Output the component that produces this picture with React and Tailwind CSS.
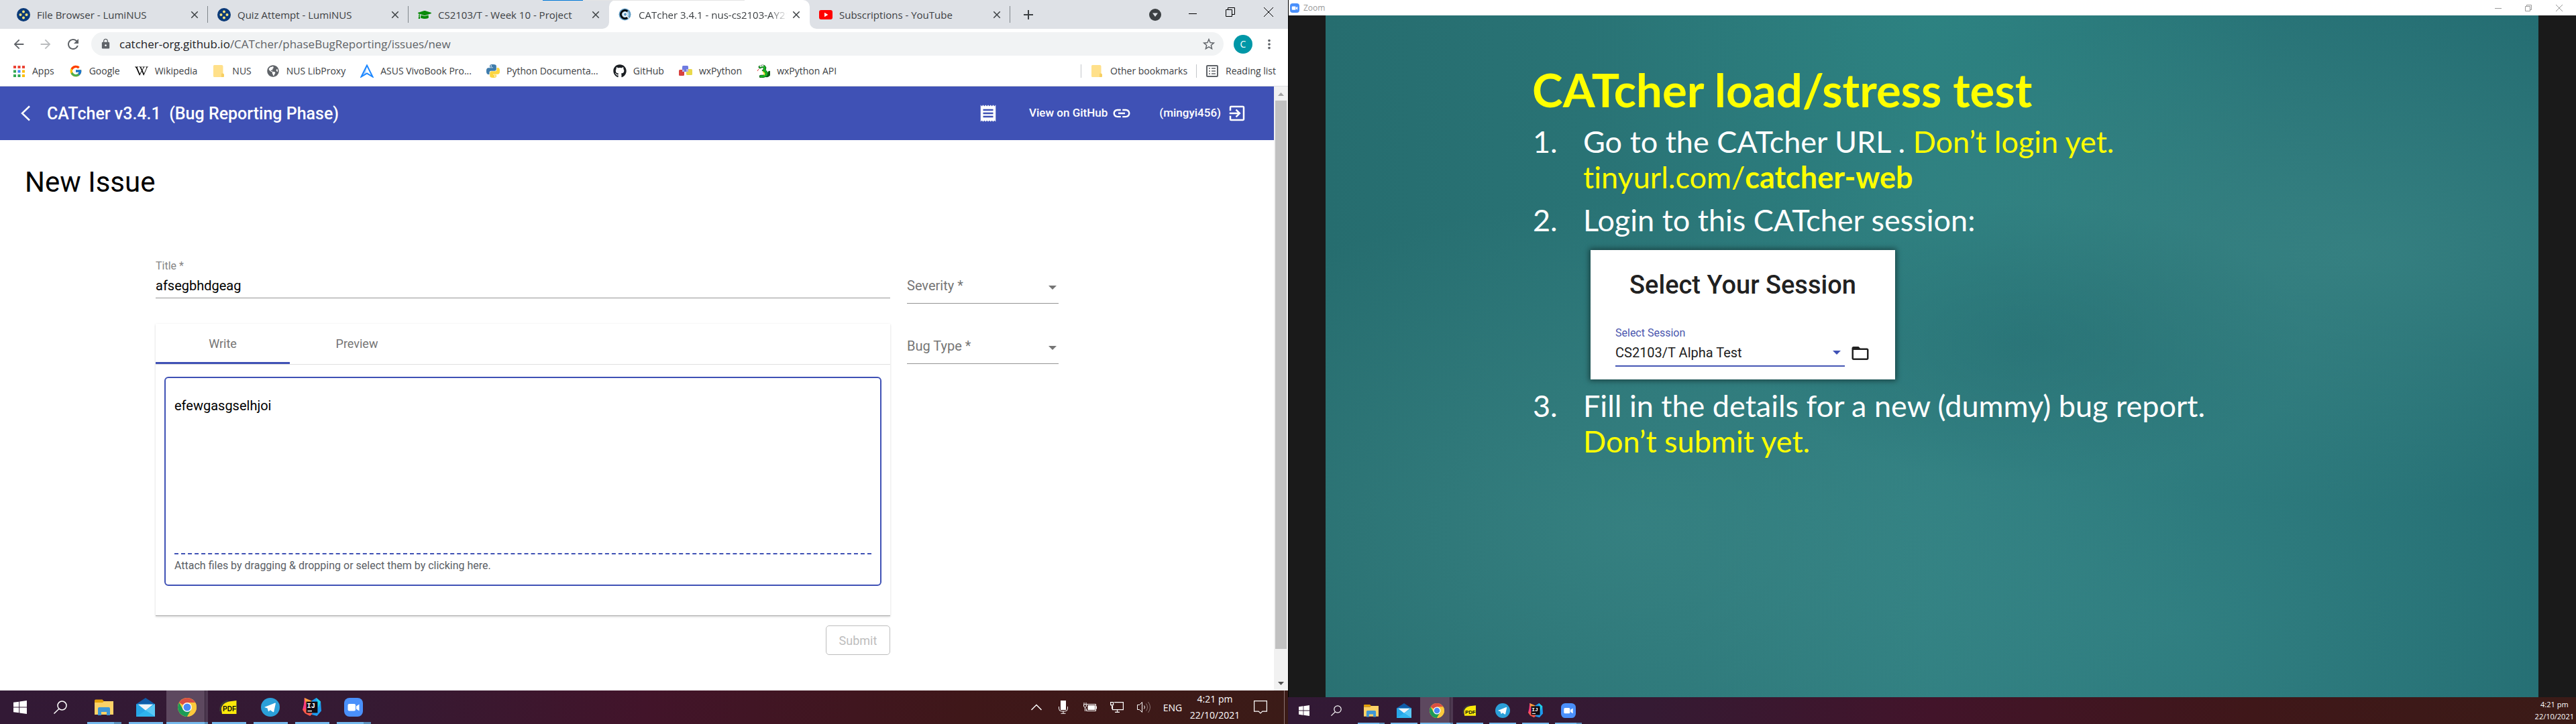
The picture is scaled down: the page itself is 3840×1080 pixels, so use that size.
import React from "react";
import { FcGoogle } from "react-icons/fc";
import { FaGithub, FaGraduationCap, FaWikipediaW, FaGlobeAmericas } from "react-icons/fa";
import { MdArrowBack, MdArrowForward, MdRefresh, MdLock, MdStarBorder, MdMoreVert, MdReceipt, MdLink, MdExitToApp, MdFolderOpen, MdClose, MdAdd } from "react-icons/md";

const LumiIcon = () => (
  <svg viewBox="0 0 20 20" className="size-5 shrink-0" aria-hidden="true">
    <circle cx="10" cy="10" r="10" fill="#0b3a78" />
    <circle cx="10" cy="5.5" r="2" fill="#f6e27a" />
    <circle cx="10" cy="14.5" r="2" fill="#f6e27a" />
    <circle cx="5.5" cy="10" r="2" fill="#f6e27a" />
    <circle cx="14.5" cy="10" r="2" fill="#f6e27a" />
  </svg>
);
const CapIcon = () => <FaGraduationCap className="size-5 shrink-0 text-[#0a8a0a]" />;
const CatcherIcon = () => (
  <svg viewBox="0 0 20 20" className="size-5 shrink-0" aria-hidden="true">
    <circle cx="9.500" cy="9.500" r="9" fill="#5f9bc4" />
    <circle cx="9.500" cy="9.500" r="6.500" fill="#a9cbe2" />
    <path d="M13.500 5A6 6 0 1 0 13.500 14" fill="none" stroke="#000" strokeWidth="2.800" />
    <circle cx="10" cy="9.500" r="2.800" fill="#5f9bc4" stroke="#fff" strokeWidth="1.300" />
    <path d="M12 12l3.500 3.500" stroke="#fff" strokeWidth="1.300" />
  </svg>
);
const YouTubeIcon = () => (
  <svg viewBox="0 0 20 20" className="size-5 shrink-0" aria-hidden="true">
    <rect y="3" width="20" height="14" rx="3" fill="#f00" />
    <path d="M8 6.800v6.400l5.400-3.200z" fill="#fff" />
  </svg>
);
const AppsIcon = () => (
  <svg viewBox="0 0 20 20" className="size-5" aria-hidden="true">
    {["#ea4335", "#ea4335", "#ea4335", "#34a853", "#4285f4", "#fbbc05", "#34a853", "#34a853", "#fbbc05"].map((c, i) => (
      <rect key={i} x={2 + (i % 3) * 6.5} y={2 + Math.floor(i / 3) * 6.5} width="4" height="4" fill={c} />
    ))}
  </svg>
);
const FolderIcon = () => (
  <svg viewBox="0 0 20 20" className="size-5" aria-hidden="true">
    <path d="M3.500 1h11a2 2 0 0 1 2 2v10.500l1.500 1.500v2.500a1.500 1.500 0 0 1-1.500 1.500h-13a1.500 1.500 0 0 1-1.500-1.500v-15a1.500 1.500 0 0 1 1.500-1.500z" fill="#ffe08a" />
    <path d="M14 19v-4.500a1 1 0 0 1 1-1h1.500l1.500 1.500v2.500a1.500 1.500 0 0 1-1.500 1.500z" fill="#f7cf62" />
  </svg>
);
const AsusIcon = () => (
  <svg viewBox="0 0 20 20" className="size-5" aria-hidden="true">
    <path d="M10 1.500L1.500 18.500l8.500-5 8.500 5z" fill="none" stroke="#1e88ff" strokeWidth="2" />
    <path d="M10 2L8 14l-6 4z" fill="#1e88ff" opacity=".35" />
  </svg>
);
const PythonIcon = () => (
  <svg viewBox="0 0 24 24" className="size-5" aria-hidden="true">
    <path fill="#3f7cac" d="M14.250.18l.9.2.73.26.59.3.45.32.34.34.25.34.16.33.1.3.04.26.02.2-.01.13V8.500l-.05.63-.13.55-.21.46-.26.38-.3.31-.33.25-.35.19-.35.14-.33.1-.3.07-.26.04-.21.02H8.770l-.69.05-.59.14-.5.22-.41.27-.33.32-.27.35-.2.36-.15.37-.1.35-.07.32-.04.27-.02.21v3.060H3.170l-.21-.03-.28-.07-.32-.12-.35-.18-.36-.26-.36-.36-.35-.46-.32-.59-.28-.73-.21-.88-.14-1.050-.05-1.230.06-1.220.16-1.040.24-.87.32-.71.36-.57.4-.44.42-.33.42-.24.4-.16.36-.1.32-.05.24-.01h.16l.06.01h8.160v-.83H6.180l-.01-2.750-.02-.37.05-.34.11-.31.17-.28.25-.26.31-.23.38-.2.44-.18.51-.15.58-.12.64-.1.71-.06.77-.04.84-.02 1.270.05z" />
    <path fill="#fdd63f" d="M21.100 6.110l.28.06.32.12.35.18.36.27.36.35.35.47.32.59.28.73.21.88.14 1.040.05 1.230-.06 1.230-.16 1.040-.24.86-.32.71-.36.57-.4.45-.42.33-.42.24-.4.16-.36.09-.32.05-.24.02-.16-.01h-8.220v.82h5.840l.01 2.760.02.36-.05.34-.11.31-.17.29-.25.25-.31.24-.38.2-.44.17-.51.15-.58.13-.64.09-.71.07-.77.04-.84.01-1.270-.04-1.070-.14-.9-.2-.73-.25-.59-.3-.45-.33-.34-.34-.25-.34-.16-.33-.1-.3-.04-.25-.02-.2.01-.13v-5.340l.05-.64.13-.54.21-.46.26-.38.3-.32.33-.24.35-.2.35-.14.33-.1.3-.06.26-.04.21-.02.13-.01h5.840l.69-.05.59-.14.5-.21.41-.28.33-.32.27-.35.2-.36.15-.36.1-.35.07-.32.04-.28.02-.21V6.070h2.090l.14.01z" />
    <circle cx="8.700" cy="2.900" r="1.100" fill="#fff" />
    <circle cx="15.300" cy="21" r="1.100" fill="#fff" />
  </svg>
);
const WxIcon = () => (
  <svg viewBox="0 0 20 20" className="size-5" aria-hidden="true">
    <rect x="5" y="2" width="9" height="9" rx="1.500" fill="#6f7be0" />
    <rect x="0" y="8" width="8" height="9" rx="1.500" fill="#d8423f" />
    <rect x="11" y="7" width="9" height="9" rx="1.500" fill="#e9d94a" />
    <path d="M5 8h3v3H5zM11 7h3v4h-3z" fill="#b9b6e6" />
  </svg>
);
const SnakeIcon = () => (
  <svg viewBox="0 0 20 20" className="size-5" aria-hidden="true">
    <path d="M5 4q5-3 7 1 0 3-1 4c3 2 5 5 3 7s-5 2-8 2M15 17q4-1 4-5" fill="none" stroke="#0d5a16" strokeWidth="4.500" strokeLinecap="round" />
    <path d="M5 4q5-3 7 1 0 3-1 4c3 2 5 5 3 7s-5 2-8 2" fill="none" stroke="#16b622" strokeWidth="2.800" strokeLinecap="round" />
    <path d="M9 11c2 1 3 3 2 5" fill="none" stroke="#e8e832" strokeWidth="1.800" />
    <circle cx="6" cy="2.500" r="1.600" fill="#ddd" />
    <circle cx="9" cy="2" r="1.400" fill="#ddd" />
    <path d="M3 7l-2 3" stroke="#e53935" />
  </svg>
);
const ReadingIcon = () => (
  <svg viewBox="0 0 20 20" className="size-5" aria-hidden="true" fill="none" stroke="#5f6368" strokeWidth="2">
    <rect x="2" y="2" width="16" height="16" rx="1" />
    <path d="M5 6h2M9 6h6M5 10h2M9 10h6M5 14h2M9 14h6" strokeWidth="1.600" />
  </svg>
);

const TABS = [
  { title: "File Browser - LumiNUS", Icon: LumiIcon, sep: true },
  { title: "Quiz Attempt - LumiNUS", Icon: LumiIcon, sep: true },
  { title: "CS2103/T - Week 10 - Project", Icon: CapIcon },
  { title: "CATcher 3.4.1 - nus-cs2103-AY21", Icon: CatcherIcon, active: true },
  { title: "Subscriptions - YouTube", Icon: YouTubeIcon, sep: true },
];

const BOOKMARKS = [
  ["Apps", AppsIcon],
  ["Google", () => <FcGoogle className="size-5" />],
  ["Wikipedia", () => <FaWikipediaW className="size-5 text-black" />],
  ["NUS", FolderIcon],
  ["NUS LibProxy", () => <FaGlobeAmericas className="size-[18px] text-[#5f6368]" />],
  ["ASUS VivoBook Pro...", AsusIcon],
  ["Python Documenta...", PythonIcon],
  ["GitHub", () => <FaGithub className="size-5 text-[#1b1f23]" />],
  ["wxPython", WxIcon],
  ["wxPython API", SnakeIcon],
];

function Tab({ title, Icon, active, sep }) {
  return (
    <div className={"relative flex h-[43px] w-[299px] items-center pl-[14px] pr-[11px] " + (active ? "rounded-t-[10px] bg-white" : "")}>
      {active && (
        <>
          <svg viewBox="0 0 10 10" className="absolute bottom-0 -left-[10px] size-[10px]" aria-hidden="true"><path d="M10 0v10H0A10 10 0 0 0 10 0z" fill="#fff" /></svg>
          <svg viewBox="0 0 10 10" className="absolute bottom-0 -right-[10px] size-[10px]" aria-hidden="true"><path d="M0 0v10h10A10 10 0 0 1 0 0z" fill="#fff" /></svg>
        </>
      )}
      <Icon />
      <span className={"ml-[10px] min-w-0 flex-1 whitespace-nowrap text-[15px] leading-5 text-[#3c4043] " + (active ? "[mask-image:linear-gradient(to_right,#000_88%,transparent)]" : "")}>{title}</span>
      <button type="button" aria-label={"Close " + title} className="ml-1 text-[#3c4043]"><MdClose className="size-[18px]" /></button>
      {sep && <span className="absolute top-[9px] right-0 h-[25px] w-px bg-[#80868b]" />}
    </div>
  );
}

function Bookmark({ label, Icon }) {
  return (
    <a href="#" className="flex items-center gap-[10px] text-[14px] leading-5 text-[#3c4043]">
      <span className="flex size-5 items-center justify-center"><Icon /></span>
      {label}
    </a>
  );
}

function Chrome() {
  return (
    <header className="shrink-0 font-['Open_Sans',sans-serif]">
      <div className="relative flex h-[43px] items-center bg-[#dee1e6] pl-[11px]">
        {TABS.map((t) => <Tab key={t.title} {...t} />)}
        <div className="absolute top-0 left-[809px] flex h-px w-[301px] bg-[#e4e4e4]"><span className="w-[60px] bg-[#0078d7]" /></div>
        <button type="button" aria-label="New tab" className="ml-[15px] text-[#3c4043]"><MdAdd className="size-6" /></button>
        <div className="ml-auto flex items-center">
          <button type="button" aria-label="Search tabs" className="mr-[19px]">
            <svg viewBox="0 0 18 18" className="size-[18px]" aria-hidden="true"><circle cx="9" cy="9" r="9" fill="#3c4043" /><path d="M5 6.500h8l-4 5.500z" fill="#dee1e6" /></svg>
          </button>
          <button type="button" aria-label="Minimize" className="flex w-[56px] justify-center pb-2"><svg viewBox="0 0 12 12" className="size-3"><path d="M0 8.500h12" stroke="#000" /></svg></button>
          <button type="button" aria-label="Restore" className="flex w-[56px] justify-center pb-2"><svg viewBox="0 0 14 14" className="size-[14px]" fill="none" stroke="#000"><path d="M.5 3.500h9v10h-9zM3.500 3.500v-3h10v10h-4" /></svg></button>
          <button type="button" aria-label="Close" className="flex w-[58px] justify-center pb-2"><svg viewBox="0 0 14 14" className="size-[14px]" fill="none" stroke="#000"><path d="M0 0l14 14M14 0L0 14" /></svg></button>
        </div>
      </div>
      <div className="flex h-[45px] items-center bg-white pl-[17px] pr-[17px] text-[#5f6368]">
        <button type="button" aria-label="Back" className="mr-[18px]"><MdArrowBack className="size-[22px]" /></button>
        <button type="button" aria-label="Forward" className="mr-[18px] text-[#babcbe]"><MdArrowForward className="size-[22px]" /></button>
        <button type="button" aria-label="Reload" className="mr-[15px]"><MdRefresh className="size-6" /></button>
        <div className="flex h-[35px] flex-1 items-center rounded-full bg-[#f1f3f4] pl-[13px] pr-[11px] text-[17px]">
          <MdLock className="mr-[12px] size-[17px]" />
          <span className="text-[#202124]">catcher-org.github.io</span><span>/CATcher/phaseBugReporting/issues/new</span>
          <button type="button" aria-label="Bookmark this tab" className="ml-auto"><MdStarBorder className="size-[22px]" /></button>
        </div>
        <button type="button" className="ml-[15px] size-[28px] rounded-full bg-[#0097a7] text-[14px] text-white">C</button>
        <button type="button" aria-label="Menu" className="ml-[14px]"><MdMoreVert className="size-[22px]" /></button>
      </div>
      <nav className="flex h-[41px] items-center gap-[22px] border-b border-[#dadce0] bg-white pl-[18px] pr-[18px] pb-1">
        {BOOKMARKS.map(([label, Icon]) => <Bookmark key={label} label={label} Icon={Icon} />)}
        <div className="ml-auto flex items-center gap-[13px]">
          <span className="h-5 w-px bg-[#c4c7ca]" />
          <Bookmark label="Other bookmarks" Icon={FolderIcon} />
          <span className="h-5 w-px bg-[#c4c7ca]" />
          <Bookmark label="Reading list" Icon={ReadingIcon} />
        </div>
      </nav>
    </header>
  );
}

function SelectField({ label, options }) {
  return (
    <label className="relative block border-b border-[#949494] pt-5 pb-2">
      <select defaultValue="" aria-label={label} className="block h-[37px] w-full appearance-none bg-transparent text-[20px] text-[#757575] outline-none">
        <option value="" disabled>{label}</option>
        {options.map((o) => <option key={o}>{o}</option>)}
      </select>
      <svg viewBox="0 0 12 6" className="pointer-events-none absolute top-[39px] right-[3px] h-[6px] w-3" aria-hidden="true"><path d="M0 0h12L6 6z" fill="#757575" /></svg>
    </label>
  );
}

function IssuePage() {
  return (
    <div className="flex min-h-0 flex-1 font-[Roboto,sans-serif]">
      <main className="min-w-0 flex-1 bg-white">
        <div className="flex h-20 items-center bg-[#3f51b5] pl-[30px] pr-[40px] text-white">
          <button type="button" aria-label="Go back" className="mr-[24px]">
            <svg viewBox="0 0 16 24" className="h-6 w-4" fill="none" stroke="#fff" strokeWidth="2.500"><path d="M14 1.500L3 12l11 10.500" /></svg>
          </button>
          <span className="pt-0.5 text-[25px] font-medium whitespace-pre">{"CATcher v3.4.1  (Bug Reporting Phase)"}</span>
          <button type="button" aria-label="Changelog" className="ml-auto"><MdReceipt className="size-[30px]" /></button>
          <a href="#" className="ml-[46px] flex items-center gap-[6px] text-[17px] font-medium">View on GitHub<MdLink className="size-[30px]" /></a>
          <button type="button" className="ml-[41px] flex items-center gap-[9px] text-[17px] font-medium">(mingyi456)<MdExitToApp className="size-[30px]" /></button>
        </div>
        <h1 className="mt-[38px] pl-[37px] text-[42px] leading-[50px] text-black">New Issue</h1>
        <form className="mt-[90px] grid grid-cols-[1095fr_226fr] items-start gap-x-[25px] pr-[321px] pl-[232px]">
          <div>
            <label className="block border-b border-[#949494]">
              <span className="block text-[16px] leading-5 text-[#858585]">Title *</span>
              <input defaultValue="afsegbhdgeag" className="block h-[37px] w-full bg-transparent text-[20px] text-black outline-none" />
            </label>
            <section className="mt-[38px] border-b border-[#a4a4a4] pb-[44px] shadow-[0_1px_3px_0_rgba(0,0,0,0.16)]">
              <div role="tablist" className="flex h-[61px] border-b border-[#e0e0e0] text-[18px] text-[#757575]">
                <button type="button" role="tab" aria-selected="true" className="w-[200px] border-b-[3px] border-[#3f51b5] pt-px">Write</button>
                <button type="button" role="tab" aria-selected="false" className="w-[200px] pb-px">Preview</button>
              </div>
              <div className="mx-[13px] mt-[18px] flex h-[312px] flex-col rounded-md border-2 border-[#3f51b5] px-[13px]">
                <textarea aria-label="Description" defaultValue="efewgasgselhjoi" className="min-h-0 flex-1 resize-none pt-[27px] text-[20px] leading-7 text-black outline-none" />
                <button type="button" className="border-t-2 border-dashed border-[#3f51b5] pt-[6px] pb-[17px] text-left text-[16px] leading-[22px] text-[#5b6066]">Attach files by dragging &amp; dropping or select them by clicking here.</button>
              </div>
            </section>
            <button type="submit" disabled className="mt-[14px] ml-auto block h-[44px] w-[96px] rounded-[5px] border border-[#bdbdbd] text-[18px] text-[#bdbdbd]">Submit</button>
          </div>
          <div className="flex flex-col gap-6">
            <SelectField label="Severity *" options={["High", "Medium", "Low"]} />
            <SelectField label="Bug Type *" options={["Functionality", "Documentation"]} />
          </div>
        </form>
      </main>
      <div className="flex w-[21px] shrink-0 flex-col items-center bg-[#f1f1f1]" aria-hidden="true">
        <svg viewBox="0 0 21 21" className="size-[21px]"><path d="M6 14h9l-4.500-5z" fill="#a3a3a3" /></svg>
        <span className="w-[17px] flex-1 bg-[#c1c1c1]" />
        <svg viewBox="0 0 21 62" className="h-[62px] w-[21px]"><path d="M6 49h9l-4.500 5z" fill="#505050" /></svg>
      </div>
    </div>
  );
}

const WinIcon = () => <svg viewBox="0 0 20 20" className="size-full"><path d="M0 2.800L8.200 1.700v7.800H0zM9.200 1.500L20 0v9.500H9.200zM0 10.500h8.200v7.800L0 17.200zM9.200 10.500H20V20L9.200 18.500z" fill="#fff" /></svg>;
const SearchIcon = () => <svg viewBox="0 0 20 20" className="size-full" fill="none" stroke="#fff" strokeWidth="1.500"><circle cx="12.500" cy="7.500" r="6.500" /><path d="M8 12.300L.5 19.500" /></svg>;
const ExplorerIcon = () => (
  <svg viewBox="0 0 28 28" className="size-full"><path d="M0 4A1.500 1.500 0 0 1 1.500 2.500h10L14 5v2H0z" fill="#e3a008" /><path d="M0 7h12l2-2h14v20H0z" fill="#fcd267" /><path d="M5 26V16a2 2 0 0 1 2-2h14a2 2 0 0 1 2 2v10h-5v-5h-8v5z" fill="#3f97d6" /></svg>
);
const MailIcon = () => (
  <svg viewBox="0 0 30 30" className="size-full"><path d="M0 10L15 0l15 10-2 5H2z" fill="#0f5ca8" /><path d="M0 10h30v20H0z" fill="#27a6e8" /><path d="M3 10.500h24L15 20z" fill="#f1f4f7" /><path d="M30 10v20L15 20z" fill="#5ac8f5" /><path d="M30 30H0l15-10z" fill="#2fb4ee" /></svg>
);
const ChromeIcon = () => (
  <svg viewBox="0 0 28 28" className="size-full"><circle cx="14" cy="14" r="14" fill="#fcc93c" /><path d="M14 14L1.900 7A14 14 0 0 1 26.100 7H14z" fill="#d94f43" /><path d="M14 14l-6.100 3.500L1.900 7A14 14 0 0 0 14 28l6.100-10.500z" fill="#1c9b57" /><path d="M14 7h12.100A14 14 0 0 1 14 28l6.100-10.500z" fill="#fcc93c" /><circle cx="14" cy="14" r="7" fill="#fff" /><circle cx="14" cy="14" r="5.500" fill="#4a8af4" /></svg>
);
const PdfIcon = () => (
  <svg viewBox="0 0 28 28" className="size-full"><path d="M2.500 14Q7 6 14 5.500l11.500-1.500v20H4z" fill="#fbe90a" /><path d="M1.500 20C1 11 6 6 13 4.500" fill="none" stroke="#3a3a3a" strokeWidth="2.500" /><text x="15" y="20" textAnchor="middle" fontFamily="Liberation Sans, sans-serif" fontWeight="700" fontSize="10" fill="#111">PDF</text></svg>
);
const TelegramIcon = () => (
  <svg viewBox="0 0 28 28" className="size-full"><circle cx="14" cy="14" r="14" fill="#2b9fd9" /><path d="M5.500 13.800L20.600 7.700c.8-.3 1.400.2 1.200 1.200l-2.500 11.500c-.2.9-.8 1.100-1.500.7l-4-2.900-2 1.900c-.4.4-.8.2-.9-.3l-1.300-4.300-3.900-1.200c-.8-.3-.8-.7-.2-.5z" fill="#fff" /></svg>
);
const IjIcon = () => (
  <svg viewBox="0 0 30 30" className="size-full"><path d="M3 0l10 5-1 18H6L0 19l2-8z" fill="#fc3b7c" /><path d="M3 0l12 5-9 6z" fill="#fca23c" /><path d="M14 5l8-5 7 6 1 15-7 8-11-3 8-8z" fill="#1e9bf0" /><path d="M22 0l7 6-4 10z" fill="#21d1e8" /><path d="M0 19l6-2 10 8-4 4-8-4z" fill="#fb5a4c" /><rect x="6" y="6" width="18" height="18" fill="#100a10" /><text x="7" y="16" fontFamily="Liberation Mono, monospace" fontWeight="700" fontSize="11" fill="#fff">IJ</text><path d="M8 21h7" stroke="#fff" strokeWidth="1.500" /></svg>
);
const ZoomIcon = () => (
  <svg viewBox="0 0 28 28" className="size-full"><rect width="28" height="28" rx="8" fill="#4a90fb" /><rect x="5.500" y="9" width="11.500" height="10.500" rx="2" fill="#fff" /><path d="M18 12.500l4.500-3v10l-4.500-3z" fill="#fff" /></svg>
);

const APPS = [
  ["File Explorer", ExplorerIcon, "multi"],
  ["Mail", MailIcon],
  ["Google Chrome", ChromeIcon, "active"],
  ["PDF reader", PdfIcon],
  ["Telegram", TelegramIcon],
  ["IntelliJ IDEA", IjIcon],
  ["Zoom", ZoomIcon, "multi"],
];

const LARGE = { bar: "h-[50px]", first: "w-[60px]", sys: "size-5", pad: "w-1", item: "w-[62px]", icon: "size-[28px]", line: "w-[51px]", lineH: "h-[3px]" };
const SMALL = { bar: "h-[40px]", first: "w-[48px]", sys: "size-4", pad: "w-[3px]", item: "w-[49px]", icon: "size-[22px]", line: "w-[40px]", lineH: "h-[2px]" };

function Taskbar({ s, children }) {
  return (
    <footer className={"flex shrink-0 items-stretch bg-[linear-gradient(to_right,#321935,#351a33_28%,#42142a_50%,#3f1719_75%,#3b1b17)] font-['Open_Sans',sans-serif] text-white " + s.bar}>
      <button type="button" aria-label="Start" className={"flex items-center justify-center " + s.first}><span className={s.sys}><WinIcon /></span></button>
      <button type="button" aria-label="Search" className={"flex items-center justify-center " + s.first}><span className={s.sys}><SearchIcon /></span></button>
      <span className={s.pad} />
      {APPS.map(([name, Icon, state]) => (
        <button key={name} type="button" aria-label={name} className={"relative flex flex-col items-center justify-center " + s.item + (state === "active" ? " bg-[#5d485f]" : "")}>
          {state === "active" && <span className="absolute inset-y-0 right-0 w-[5px] border-l border-[#352538] bg-[#4d3850]" />}
          <span className={s.icon}><Icon /></span>
          <span className={"absolute bottom-0 flex bg-[#76b9ed] " + s.lineH + " " + (state === "active" ? "w-full" : s.line)}>
            {state && <span className={"ml-auto bg-[#5b8fbb] " + (state === "active" ? "w-1/12" : "w-1/5")} />}
          </span>
        </button>
      ))}
      {children}
    </footer>
  );
}

function Tray() {
  const cell = "flex w-10 items-center justify-center";
  return (
    <div className="ml-auto flex items-stretch text-[14px]">
      <button type="button" aria-label="Show hidden icons" className={cell}><svg viewBox="0 0 16 10" className="h-[10px] w-4" fill="none" stroke="#fff" strokeWidth="1.500"><path d="M.5 9L8 1.500 15.500 9" /></svg></button>
      <button type="button" aria-label="Microphone" className={cell}><svg viewBox="0 0 14 20" className="h-5 w-[14px]"><rect x="3" width="8" height="14" fill="#fff" /><path d="M.5 9v3a4 4 0 0 0 4 4h5a4 4 0 0 0 4-4V9M7 16v3M3.500 19.300h7" fill="none" stroke="#fff" /></svg></button>
      <button type="button" aria-label="Battery" className={cell}><svg viewBox="0 0 20 14" className="h-[14px] w-5" fill="none" stroke="#fff"><path d="M5 2.500h13.500v10H4.500V9" /><rect x="7" y="4.500" width="10" height="6" fill="#fff" /><path d="M19.500 5.500v4M1 0v3M4 0v3M.5 3h4v2a2 2 0 0 1-4 0zM2.500 7v6" /></svg></button>
      <button type="button" aria-label="Network" className={cell}><svg viewBox="0 0 20 16" className="h-4 w-5" fill="none" stroke="#fff" strokeWidth="1.200"><path d="M6 .6h13.400v11H3.500V6M.6.600h4v4h-4zM2.600 4.600v6M10.500 12v3M7 15.300h7" /></svg></button>
      <button type="button" aria-label="Volume" className={cell}><svg viewBox="0 0 20 18" className="h-[18px] w-5" fill="none" stroke="#fff"><path d="M.5 5.500h3l4-4v15l-4-4h-3z" /><path d="M10.500 6.500q2 2.500 0 5" /><path d="M13.500 3.500q4 5.500 0 11M16.500 1q6 8 0 16" opacity=".4" /></svg></button>
      <button type="button" className="w-[46px]">ENG</button>
      <div className="flex w-20 flex-col items-center justify-center leading-6 whitespace-nowrap"><span>4:21 pm</span><span>22/10/2021</span></div>
      <button type="button" aria-label="Notifications" className="flex w-14 items-center justify-center"><svg viewBox="0 0 20 20" className="size-5" fill="none" stroke="#fff" strokeWidth="1.200"><path d="M.6.600h18.800v15.500h-6.500L10 19l-2.900-2.900H.6z" /></svg></button>
      <span className="mr-[5px] ml-[7px] w-px bg-[#8c7473]" />
    </div>
  );
}

function Slide() {
  const y = "text-[#ffff00]";
  return (
    <article className="flex-1 bg-[#2b7578] bg-[radial-gradient(ellipse_at_58%_48%,rgba(28,98,104,0.35),transparent_28%),radial-gradient(ellipse_at_25%_75%,rgba(80,155,152,0.3),transparent_45%),radial-gradient(ellipse_at_85%_35%,rgba(80,155,150,0.35),transparent_40%),radial-gradient(ellipse_at_70%_90%,rgba(65,150,150,0.3),transparent_40%),radial-gradient(ellipse_at_50%_0%,rgba(45,140,135,0.4),transparent_40%),linear-gradient(to_right,#266d6f,#2d7b7d_50%,#246d72)] pt-[71px] pl-[309px] font-[Lato,sans-serif] text-white [font-variant-ligatures:none]">
      <h2 className={"-ml-px text-[69px] leading-[80px] font-bold " + y}>CATcher load/stress test</h2>
      <ol className="mt-[11px] text-[45px] leading-[53px]">
        <li className="flex"><span className="w-[75px]">1.</span><p>Go to the CATcher URL . <span className={y}>Don’t login yet.<br />tinyurl.com/<b>catcher-web</b></span></p></li>
        <li className="mt-[11px] flex">
          <span className="w-[75px]">2.</span>
          <div>
            <p>Login to this CATcher session:</p>
            <section className="mt-[18px] ml-[11px] flex h-[193px] w-[454px] flex-col bg-white px-[37px] font-[Roboto,sans-serif] text-[#212121] shadow-[0_0_8px_2px_rgba(0,0,0,0.45)]">
              <h3 className="mt-[30px] text-center text-[38px] leading-[44px] font-medium">Select Your Session</h3>
              <label htmlFor="session" className="mt-[40px] text-[16px] leading-5 text-[#4a56ae]">Select Session</label>
              <div className="flex items-center gap-[8px]">
                <div className="relative w-[342px] border-b-2 border-[#4456b4]">
                  <select id="session" className="block h-[38px] w-full appearance-none bg-transparent text-[20px] leading-6 outline-none"><option>CS2103/T Alpha Test</option></select>
                  <svg viewBox="0 0 12 6" className="pointer-events-none absolute top-[16px] right-[6px] h-[6px] w-3" aria-hidden="true"><path d="M0 0h12L6 6z" fill="#3f51b5" /></svg>
                </div>
                <button type="button" aria-label="Open session file"><MdFolderOpen className="size-[30px]" /></button>
              </div>
            </section>
          </div>
        </li>
        <li className="mt-[13px] flex"><span className="w-[75px]">3.</span><p>Fill in the details for a new (dummy) bug report.<br /><span className={y}>Don’t submit yet.</span></p></li>
      </ol>
    </article>
  );
}

export default function App() {
  return (
    <div className="flex h-screen w-full overflow-hidden bg-white">
      <div className="flex min-w-0 flex-1 flex-col">
        <Chrome />
        <IssuePage />
        <Taskbar s={LARGE}><Tray /></Taskbar>
      </div>
      <div className="flex min-w-0 flex-1 flex-col">
        <div className="flex min-h-0 flex-1 flex-col border-l border-black bg-[#1a1a1a]">
          <div className="flex h-[23px] shrink-0 items-center bg-white pr-[20px] pl-[2px] text-[#999]">
            <span className="size-[14px]"><ZoomIcon /></span>
            <span className="ml-[6px] font-['Open_Sans',sans-serif] text-[12px]">Zoom</span>
            <button type="button" aria-label="Minimize Zoom" className="ml-auto"><svg viewBox="0 0 10 10" className="size-[10px]" stroke="currentColor"><path d="M0 5.500h10" /></svg></button>
            <button type="button" aria-label="Restore Zoom" className="ml-[35px]"><svg viewBox="0 0 10 10" className="size-[10px]" fill="none" stroke="currentColor"><path d="M.5 2.500h7v7h-7zM2.500 2.500v-2h7v7h-2" /></svg></button>
            <button type="button" aria-label="Close Zoom" className="ml-[36px]"><svg viewBox="0 0 10 10" className="size-[10px]" stroke="currentColor"><path d="M0 0l10 10M10 0L0 10" /></svg></button>
          </div>
          <div className="flex min-h-0 flex-1 pr-[56px] pl-[55px]"><Slide /></div>
        </div>
        <Taskbar s={SMALL}>
          <div className="ml-auto flex flex-col items-center justify-center pr-[3px] text-[11px] leading-[18px]"><span>4:21 pm</span><span>22/10/2021</span></div>
        </Taskbar>
      </div>
    </div>
  );
}
